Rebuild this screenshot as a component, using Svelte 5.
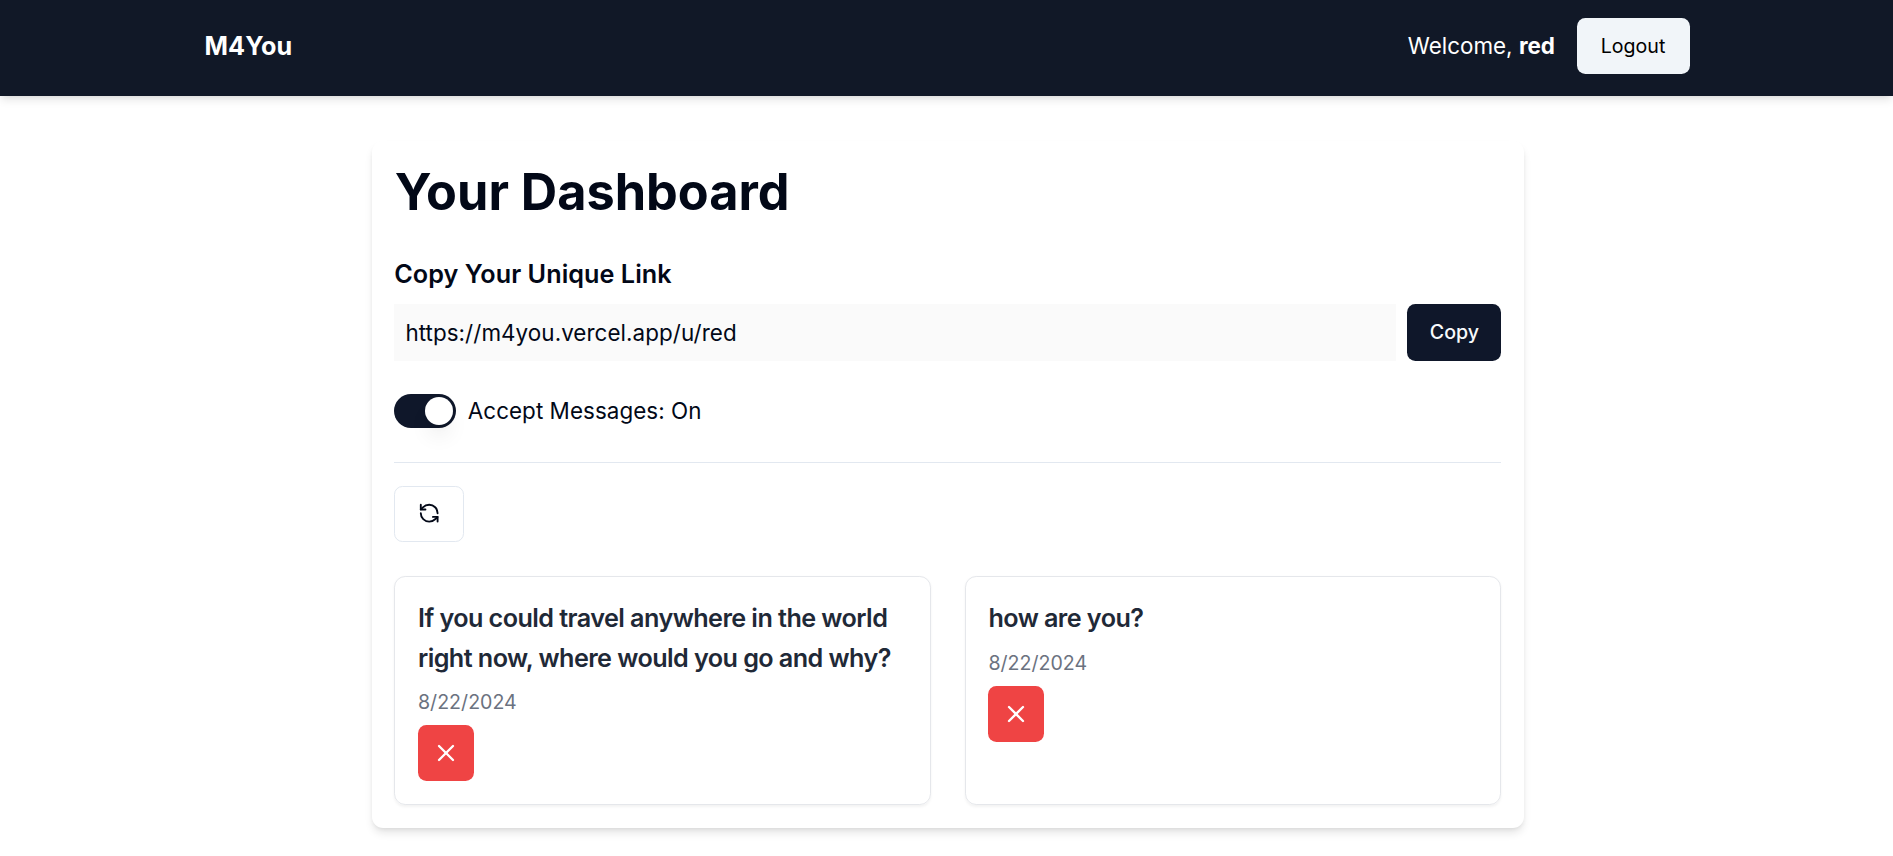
<script>
  let accepting = $state(true);
  const messages = [
    { text: 'If you could travel anywhere in the world right now, where would you go and why?', date: '8/22/2024' },
    { text: 'how are you?', date: '8/22/2024' }
  ];
</script>

<div class="page">
  <nav>
    <div class="bar">
      <a class="brand" href="#top">M4You</a>
      <div class="account">
        <span class="welcome">Welcome, <b>red</b></span>
        <button class="logout">Logout</button>
      </div>
    </div>
  </nav>

  <main>
    <h1>Your Dashboard</h1>
    <h2>Copy Your Unique Link</h2>
    <div class="link">
      <div class="url">https://m4you.vercel.app/u/red</div>
      <button class="copy">Copy</button>
    </div>
    <div class="accept">
      <button class="switch" class:on={accepting} aria-label="Accept messages" onclick={() => (accepting = !accepting)}>
        <span class="thumb"></span>
      </button>
      <span class="state">Accept Messages: {accepting ? 'On' : 'Off'}</span>
    </div>
    <hr />
    <button class="refresh" aria-label="Refresh">
      <svg viewBox="0 0 24 24">
        <path d="M21 12a9 9 0 0 0-9-9 9.75 9.75 0 0 0-6.74 2.74L3 8" />
        <path d="M3 3v5h5" />
        <path d="M3 12a9 9 0 0 0 9 9 9.75 9.75 0 0 0 6.74-2.74L21 16" />
        <path d="M16 16h5v5" />
      </svg>
    </button>
    <div class="messages">
      {#each messages as message}
        <article>
          <h3>{message.text}</h3>
          <p>{message.date}</p>
          <button class="delete" aria-label="Delete">
            <svg viewBox="0 0 24 24"><path d="M18 6 6 18" /><path d="m6 6 12 12" /></svg>
          </button>
        </article>
      {/each}
    </div>
  </main>
</div>

<style>
  :global(body) {
    margin: 0;
    background: #fff;
    color: #020817;
    font-family: Inter, 'Liberation Sans', sans-serif;
  }
  .page { box-sizing: border-box; min-height: 100vh; }
  h1, h2, h3, p, hr { margin: 0; }
  button {
    display: flex;
    align-items: center;
    justify-content: center;
    box-sizing: border-box;
    padding: 0;
    border: 0;
    border-radius: 8.4px;
    font: 500 19.6px/28px Inter, 'Liberation Sans', sans-serif;
  }
  svg {
    fill: none;
    stroke: currentColor;
    stroke-width: 2;
    stroke-linecap: round;
    stroke-linejoin: round;
  }
  nav {
    height: 96px;
    box-sizing: border-box;
    padding-top: 18px;
    background: #111827;
    color: #fff;
    box-shadow: 0 5.6px 8.4px -1.4px rgba(0, 0, 0, 0.1), 0 2.8px 5.6px -2.8px rgba(0, 0, 0, 0.1);
  }
  .bar {
    display: flex;
    align-items: center;
    justify-content: space-between;
    width: 1485px;
    height: 56px;
    margin: 0 auto;
    padding-left: 1px;
  }
  .brand {
    color: inherit;
    text-decoration: none;
    font-weight: 700;
    font-size: 25.2px;
    letter-spacing: 0.1px;
  }
  .account { display: flex; align-items: center; gap: 21.6px; }
  .welcome { font-size: 22.4px; line-height: 28px; padding-bottom: 1px; }
  .logout {
    width: 113px;
    height: 56px;
    background: #f1f5f9;
    color: #000;
    font-weight: 400;
  }
  main {
    box-sizing: border-box;
    width: 1152px;
    height: 687px;
    margin: 45px auto 0;
    padding: 22.4px;
    border-radius: 11.2px;
    background: #fff;
    box-shadow: 0 5.6px 8.4px -1.4px rgba(0, 0, 0, 0.1), 0 2.8px 5.6px -2.8px rgba(0, 0, 0, 0.1);
    margin-left: calc(50% - 574.7px);
  }
  h1 { padding: 0.6px 0 0 0.6px; font-weight: 700; font-size: 50.4px; line-height: 56px; }
  h2 {
    margin: 34.6px 0 9.8px;
    font-weight: 600;
    font-size: 25.2px;
    line-height: 39.2px;
    letter-spacing: 0.05px;
  }
  .link { display: flex; gap: 11.8px; height: 57px; }
  .url {
    flex: 1;
    padding-left: 11.2px;
    background: #fafafa;
    font-size: 22.4px;
    line-height: 57px;
    letter-spacing: 0.07px;
  }
  .copy { width: 94px; height: 57px; background: #0f172a; color: #f8fafc; }
  .accept { display: flex; align-items: center; gap: 11.6px; margin-top: 33px; }
  .switch {
    justify-content: flex-start;
    width: 62px;
    height: 34px;
    padding: 3px;
    border-radius: 99px;
    background: #e2e8f0;
  }
  .switch.on { justify-content: flex-end; background: #0f172a; }
  .thumb {
    width: 28px;
    height: 28px;
    border-radius: 50%;
    background: #fff;
    box-shadow: 0 14px 21px -4.2px rgba(0, 0, 0, 0.1), 0 5.6px 8.4px -5.6px rgba(0, 0, 0, 0.1);
  }
  .state { font-size: 22.4px; line-height: 33.6px; letter-spacing: 0.06px; }
  hr { height: 1px; margin-top: 34px; border: 0; background: #e2e8f0; }
  .refresh {
    width: 70px;
    height: 56px;
    margin-top: 23px;
    border: 1px solid #e2e8f0;
    background: #fff;
    color: #020817;
  }
  .refresh svg { width: 22.4px; height: 22.4px; }
  .messages {
    display: grid;
    grid-template-columns: 1fr 1fr;
    gap: 33.6px;
    margin-top: 34px;
  }
  article {
    box-sizing: border-box;
    height: 229px;
    padding: 22.8px;
    border: 1px solid #e5e7eb;
    border-radius: 11.2px;
    box-shadow: 0 1.4px 2.8px rgba(0, 0, 0, 0.05);
  }
  h3 {
    color: #1f2937;
    font-weight: 600;
    font-size: 25.2px;
    line-height: 39.2px;
    letter-spacing: -0.57px;
  }
  p { margin-top: 10.6px; color: #6b7280; font-size: 19.6px; line-height: 28px; }
  .delete {
    width: 56px;
    height: 56px;
    margin-top: 8.4px;
    background: #ef4444;
    color: #fff;
  }
  .delete svg { width: 28px; height: 28px; }
</style>
